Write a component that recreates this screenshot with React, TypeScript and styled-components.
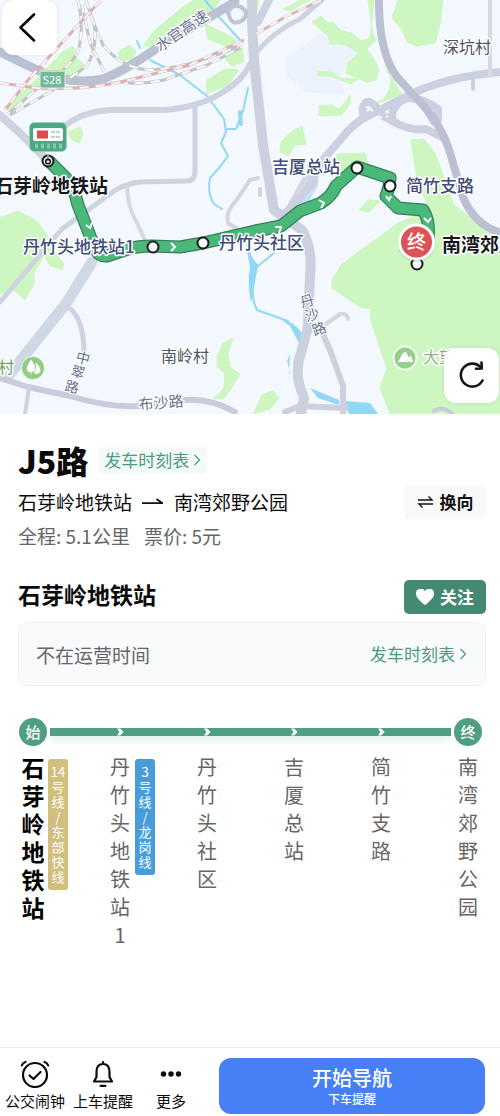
import React from "react";
import styled, { createGlobalStyle } from "styled-components";

const GlobalStyle = createGlobalStyle`
  * { box-sizing: border-box; }
  body {
    margin: 0;
    background: #fff;
    color: #0b0b0b;
    font-family: "Noto Sans CJK SC", "Noto Sans", sans-serif;
  }
  button { font-family: inherit; border: 0; padding: 0; cursor: pointer; color: inherit; }
  h1, h2, p, ol { margin: 0; padding: 0; }
  a { text-decoration: none; }
`;

const Page = styled.div`
  min-height: 100vh;
  display: flex;
  flex-direction: column;
`;

const MapPanel = styled.section`
  position: relative;
  height: 414px;
  overflow: hidden;
  background: #f3f9fe;
`;

const MapDrawing = styled.svg`
  display: block;
  width: 100%;
  height: 100%;
`;

const MapButton = styled.button<{ $corner: "back" | "refresh" }>`
  position: absolute;
  ${(p) => (p.$corner === "back" ? "left: 2px; top: 0;" : "right: 1px; bottom: 11px;")}
  width: 55px;
  height: 55px;
  display: flex;
  align-items: center;
  justify-content: center;
  background: #fff;
  border-radius: 12px;
  box-shadow: 0 0 4px rgba(80, 90, 120, 0.12);
`;

const Content = styled.main`
  flex: 1;
  padding: 26px 14px 0 18px;
`;

const Row = styled.div<{ $between?: boolean; $gap?: number }>`
  display: flex;
  align-items: center;
  justify-content: ${(p) => (p.$between ? "space-between" : "flex-start")};
  gap: ${(p) => p.$gap ?? 0}px;
`;

const LineName = styled.h1`
  font-size: 32px;
  line-height: 40px;
  font-weight: 900;
`;

const TimetableLink = styled.a<{ $tag?: boolean }>`
  display: inline-flex;
  align-items: center;
  gap: 4px;
  height: 27px;
  padding: ${(p) => (p.$tag ? "0 6px 0 5px" : "0")};
  border-radius: 4px;
  background: ${(p) => (p.$tag ? "#f4faf8" : "transparent")};
  color: #4a9c80;
  font-size: 17px;
  line-height: 24px;
`;

const DirectionRow = styled(Row)`
  padding-top: 5px;
`;

const Direction = styled.p`
  display: flex;
  align-items: center;
  gap: 10px;
  font-size: 19px;
  line-height: 34px;
`;

const Facts = styled.p`
  display: flex;
  gap: 14px;
  padding-top: 3px;
  color: #666;
  font-size: 19px;
  line-height: 28px;
`;

const PillButton = styled.button<{ $solid?: boolean }>`
  display: flex;
  align-items: center;
  justify-content: center;
  gap: 6px;
  width: 82px;
  height: 34px;
  border-radius: 5px;
  background: ${(p) => (p.$solid ? "#438973" : "#f9f9f9")};
  color: ${(p) => (p.$solid ? "#fff" : "#111")};
  font-size: 17px;
  line-height: 24px;
  font-weight: 700;
`;

const StopHeader = styled(Row)`
  align-items: flex-start;
  padding-top: 30px;
`;

const StopTitle = styled.h2`
  font-size: 23px;
  line-height: 28px;
  font-weight: 700;
`;

const StatusCard = styled.div`
  display: flex;
  align-items: center;
  justify-content: space-between;
  height: 64px;
  margin-top: 8px;
  padding: 0 18px 0 17px;
  border: 1px solid #f0f1f3;
  border-radius: 10px;
  background: #f9fafb;
  color: #666;
  font-size: 19px;
`;

const RouteTrack = styled.div`
  position: relative;
  display: flex;
  justify-content: space-between;
  align-items: center;
  height: 30px;
  margin: 31px 3px 0 0;
  &::before {
    content: "";
    position: absolute;
    left: 32px;
    right: 32px;
    top: 11px;
    height: 8px;
    background: #519f82;
    box-shadow: 0 5px 6px rgba(81, 159, 130, 0.16);
  }
`;

const TrackCell = styled.span`
  position: relative;
  width: 30px;
  display: flex;
  justify-content: center;
`;

const Terminal = styled.span`
  width: 28px;
  height: 28px;
  border-radius: 50%;
  background: #519f82;
  color: #fff;
  font-size: 15px;
  line-height: 28px;
  font-weight: 500;
  text-align: center;
`;

const Stops = styled.ol`
  display: flex;
  justify-content: space-between;
  align-items: flex-start;
  margin: 6px 3px 0 0;
  list-style: none;
`;

const Stop = styled.li`
  position: relative;
  width: 30px;
  display: flex;
  justify-content: center;
`;

const StopName = styled.span<{ $current?: boolean }>`
  width: 24px;
  color: ${(p) => (p.$current ? "#000" : "#666")};
  font-size: ${(p) => (p.$current ? 23 : 20)}px;
  font-weight: ${(p) => (p.$current ? 700 : 400)};
  line-height: 28px;
  text-align: center;
  line-break: anywhere;
`;

const Transfer = styled.span<{ $color: string }>`
  position: absolute;
  left: 30px;
  top: 6px;
  width: 20px;
  padding: 5px 2px 6px;
  border-radius: 3px;
  background: ${(p) => p.$color};
  color: #fff;
  font-size: 13px;
  line-height: 15px;
  text-align: center;
  line-break: anywhere;
`;

const BottomBar = styled.footer`
  display: flex;
  align-items: center;
  height: 69px;
  padding: 8px 15px 0 1px;
  border-top: 1px solid #ececec;
`;

const BarItem = styled.button`
  flex: none;
  width: 68px;
  display: flex;
  flex-direction: column;
  align-items: center;
  gap: 2px;
  background: none;
  font-size: 15px;
  line-height: 22px;
  white-space: nowrap;
`;

const StartButton = styled.button`
  flex: 1;
  height: 56px;
  margin-left: 14px;
  display: flex;
  flex-direction: column;
  align-items: center;
  justify-content: center;
  border-radius: 12px;
  background: #4780f6;
  color: #fff;
  font-size: 20px;
  line-height: 26px;
  font-weight: 500;
  small { font-size: 12px; line-height: 16px; }
`;

const Chevron = () => (
  <svg width="8" height="12" viewBox="0 0 8 12" fill="none" stroke="currentColor" strokeWidth="1.3" aria-hidden="true">
    <path d="M1.5 1 6.5 6l-5 5" />
  </svg>
);

const TrackChevron = () => (
  <svg width="8" height="8" viewBox="0 0 8 8" fill="#fff" aria-hidden="true">
    <path d="M1 .5h3.200L7.600 4 4.200 7.500H1L3.400 4z" />
  </svg>
);

const ROADS: [string, number, string][] = [
  ["M0 115 20 133 47 160 66 176", 8, "#cdd3e0"],
  ["M66 125Q84 111 112 110L165 110Q200 107 223 92Q243 80 250 64", 6, "#cdd3e0"],
  ["M195 106V171Q195 181 187 181L140 182Q122 184 110 194L62 229 0 302", 5, "#cdd3e0"],
  ["M127 187Q128 208 136 221L145 240", 4, "#d4d9e4"],
  ["M92 262 65 305 40 336 10 374", 11, "#d1d8e5"],
  ["M68 307Q83 317 84 350", 5, "#cdd3e0"],
  ["M0 378 28 387 70 396Q110 408 138 406L185 400Q210 398 235 412", 6, "#c8cddd"],
  ["M29 388 25 414", 4, "#cdd3e0"],
  ["M250 180 236 201Q225 212 228 223L240 231", 4, "#d1d6e2"],
  ["M254 55Q275 30 300 19L322 0", 5, "#ccd3e2"],
  ["M250 180 258 178M260 189V195", 4, "#d1d6e2"],
  ["M270 -2 258 22", 8, "#ccd2df"],
  ["M252 0V22L254 60 263 145 274 210 302 230Q313 249 310 275L308 327 301 353Q293 373 304 398L300 418", 10, "#cbd1df"],
  ["M310 182 292 214", 17, "#d1d7e4"],
  ["M500 72Q445 77 407 96L370 115Q355 121 341 139L321 162 309 188 281 218", 8, "#cbd1e1"],
  ["M363 116V107Q367 97 375 106L383 116 398 124Q413 131 426 129L444 138", 8, "#cbd1e1"],
  ["M392 121Q391 104 407 98Q424 98 438 109V120M422 102 434 122", 8, "#cbd1e1"],
  ["M490 0V76", 4, "#d5dae7"],
  ["M473 80V89", 4, "#cbd1e1"],
  ["M326 324 340 314Q347 313 348 319", 4, "#d2d7e0"],
  ["M321 330 330 350 343 386V414M285 412 300 406 345 408", 6, "#ccd1dd"],
  ["M434 411Q443 405 452 414", 4, "#c5cbe0"],
  ["M0 52 35 69Q68 86 103 79Q126 70 157 48L235 2", 9, "#b9c1d3"],
  ["M228 14Q231 3 241 7Q250 13 243 20Q232 27 229 15", 4, "#bdc5d7"],
  ["M379 -4Q378 51 397 77L419 101Q442 124 451 156L463 197Q475 226 502 233", 8, "#bcc0d3"],
];

const RAILS: [string, string][] = [
  ["M78 0Q84 26 79 48Q72 68 48 79L8 114", "#c4c3c9"],
  ["M86 0 94 24Q98 47 87 66L50 92 10 115", "#c4c3c9"],
  ["M82 4 90 43 104 71", "#c4c3c9"],
  ["M91 17 103 45Q123 69 150 70Q200 66 243 43", "#c4c3c9"],
  ["M119 82Q140 85 164 80L207 65 242 47", "#c4c3c9"],
  ["M101 0 60 45 28 80 5 110", "#ddb1b4"],
  ["M0 83 38 88Q91 91 137 78L190 65 244 40", "#ddb1b4"],
  ["M256 34 287 16 322 0", "#ddb1b4"],
];

const ROUTE =
  "M48 160 66 178Q74 187 78 205L94 246Q98 257 107 256L128 249Q138 246 152 246L180 247 203 243 255 231 281 226 300 211 321 203Q332 196 336 186L357 167 390 178 389 187 386 196 398 208 423 210Q430 220 428 238";

const PARKS = [
  "M143 46 155 30 184 6 194 0H220L207 20 196 30 160 46Z",
  "M118 52 129 45 136 51 133 60H120Z",
  "M205 24 232 37 242 47 244 62 232 66 225 59 230 48 208 39Z",
  "M206 94 207 80 225 69 239 70 228 85Z",
  "M62 52 73 46 77 58 85 66 77 77H50L10 112 6 107 43 73Z",
  "M68 132 80 127 83 134 79 143 71 139Z",
  "M0 218 18 211 37 221 47 235 53 249 64 264 62 270 50 266 44 255 34 273 34 284 25 300 14 290 0 294Z",
  "M250 0H259L257 12H250ZM283 9 301 0H310L290 11Z",
  "M312 22 321 16 327 22 334 23 340 30 353 34 361 41 370 38 374 0H368L373 35 376 40 367 49 374 59 379 70 376 80 366 82 346 73 348 63 358 53 346 45 339 44H330L328 36Z",
  "M392 18 398 0H443L440 24 435 43 417 46 407 42 402 30Z",
  "M317 71 332 72 339 78 358 79 351 84 330 76H318Z",
  "M319 106 332 105 339 109 346 101 350 95 350 104 342 115 319 116Z",
  "M280 152 281 142 291 132 302 126 306 144 295 145 288 156Z",
  "M385 62 387 71 402 94 376 104Q390 97 391 80Z",
  "M337 154 365 153 367 161 336 177Z",
  "M411 140 424 139 435 153 447 186 454 205 500 240V414H390L380 388 387 369 370 318 371 309 360 307 332 288 332 280 342 264 398 223 418 215 429 210 417 179Z",
  "M359 210 368 200 380 201 369 212Z",
  "M223 343 233 338 228 353 230 367 240 374 231 389 223 399 213 399 224 388 225 374 217 366 217 357Z",
  "M262 395 273 391 279 398 270 409 253 414Z",
];

const haloText = { stroke: "#fff", strokeWidth: 3, paintOrder: "stroke", strokeLinejoin: "round" } as const;

const RouteMap = () => (
  <MapDrawing viewBox="0 0 500 414" preserveAspectRatio="xMidYMid slice" role="img" aria-label="J5路线路地图">
    <path d="M285 58 325 30 360 48 340 75 345 95 305 92 286 75Z" fill="#edf3fd" />
    {PARKS.map((d) => (
      <path key={d} d={d} fill="#cef6c0" stroke="#cef6c0" strokeWidth="1" strokeLinejoin="round" />
    ))}
    <g fill="none" stroke="#92d8f6" strokeLinecap="round" strokeLinejoin="round">
      <path d="M137 41 140 48M150 60 180 75 207 96 224 119 226 132 221 143 228 156Q220 168 210 178Q207 193 214 204L222 209M226 129 236 129 243 111 248 88M205 0 220 18 240 40" strokeWidth="2" />
      <path d="M241 124 240 112" strokeWidth="4" />
      <path d="M248 240Q246 255 258 266L274 253M257 266Q248 292 257 310L288 321" strokeWidth="2" />
    </g>
    <path d="M247 250 258 266 251 303Q247 282 250 268ZM278 317Q296 322 303 335L299 343 290 326ZM290 354 289 372 291 377 287 361ZM310 388 339 400V405L318 398ZM345 401 370 403 378 414H349Z" fill="#92d8f6" />
    <g fill="none" strokeLinecap="round" strokeLinejoin="round">
      {ROADS.map(([d, width, color]) => (
        <path key={d} d={d} strokeWidth={width} stroke={color} />
      ))}
    </g>
    {RAILS.map(([d, color]) => (
      <g key={d} fill="none">
        <path d={d} stroke={color} strokeWidth="3" />
        <path d={d} stroke="#faf8fb" strokeWidth="2" strokeDasharray="9 7" />
      </g>
    ))}
    <path d="M366 107 373 111M378 116 382 118M386 117 388 116" stroke="#f3f8fe" strokeWidth="2" />
    <path d="M314 190 304 201" stroke="#bfe6f8" strokeWidth="3" />

    <rect x="40" y="70" width="25" height="18" rx="2" fill="#6fba9a" stroke="#d8eee0" />
    <path d="M41 71H64" stroke="#e2d4a7" strokeWidth="2" />
    <text x="52" y="84" fontSize="11" fill="#fff" textAnchor="middle">S28</text>

    <path d={ROUTE} fill="none" stroke="#367d5f" strokeWidth="13" strokeLinejoin="round" />
    <path d={ROUTE} fill="none" stroke="#4ab878" strokeWidth="10.500" strokeLinejoin="round" />
    <g fill="none" stroke="#fff" strokeWidth="2">
      <path d="M86 225 90 228 92 223M171 243 175 247 171 251M275 227 281 227 279 233M319 200 324 203 321 208M386 196 389 200 391 196M424 218 428 222 431 218" />
    </g>

    <g fontSize="17" fontWeight="500" fill="#414c78" {...haloText}>
      <text x="272" y="173">吉厦总站</text>
      <text x="406" y="192">简竹支路</text>
      <text x="23" y="253">丹竹头地铁站1</text>
      <text x="219" y="249">丹竹头社区</text>
    </g>
    <g fontSize="19" fontWeight="700" fill="#15171c" {...haloText}>
      <text x="108" y="193" textAnchor="end">石芽岭地铁站</text>
      <text x="442" y="252">南湾郊野公园</text>
    </g>
    <g fontSize="16" fill="#50545c" {...haloText}>
      <text x="443" y="53">深坑村</text>
      <text x="161" y="362">南岭村</text>
      <text x="14" y="373" textAnchor="end" fill="#6aa65f">村</text>
      <text x="423" y="363" fill="#93ae8c">大望山</text>
    </g>
    <g fontSize="15" fill="#68718f" {...haloText}>
      <text x="160" y="52" transform="rotate(-34 160 52)">水官高速</text>
      <text x="139" y="410" transform="rotate(-5 139 410)">布沙路</text>
      <g fontSize="14" textAnchor="middle" strokeWidth="2">
        <text x="83" y="363" transform="rotate(14 83 358)">中</text>
        <text x="78" y="377" transform="rotate(14 78 372)">翠</text>
        <text x="72" y="392" transform="rotate(14 72 387)">路</text>
        <text x="307" y="306" transform="rotate(-16 307 301)">丹</text>
        <text x="312" y="320" transform="rotate(-16 312 315)">沙</text>
        <text x="319" y="334" transform="rotate(-20 319 329)">路</text>
      </g>
    </g>

    {[[153, 247], [203, 243], [357, 168], [390, 186]].map(([x, y]) => (
      <circle key={x} cx={x} cy={y} r="5.500" fill="#fff" stroke="#1c1c1c" strokeWidth="2" />
    ))}
    <circle cx="48" cy="161" r="5.500" fill="#e9e9ec" stroke="#1c1c1c" strokeWidth="2" />
    <path d="M48 154V161" stroke="#9a9aa0" strokeWidth="2" />
    <circle cx="48" cy="161.500" r="2.300" fill="none" stroke="#1c1c1c" strokeWidth="1.600" />
    <rect x="29.500" y="122.500" width="37" height="29" rx="5" fill="#4ca782" stroke="#9bd3ba" />
    <rect x="33" y="128" width="30" height="13" rx="2" fill="#fff" />
    <rect x="37" y="130.500" width="11" height="8" fill="#db4c4c" />
    <path d="M51 132H60M51 137H60" stroke="#a9dfc6" strokeWidth="2" strokeDasharray="4 1" />
    <path d="M35 146H62" stroke="#80ccaa" strokeWidth="5" strokeDasharray="3 3" />

    <circle cx="417" cy="264" r="5.500" fill="#fff" stroke="#1c1c1c" strokeWidth="2" />
    <circle cx="416.500" cy="243" r="19" fill="#9aa0a8" opacity="0.3" />
    <circle cx="416.500" cy="242" r="17" fill="#dc5257" stroke="#fff" strokeWidth="3" />
    <text x="416.500" y="249" fontSize="19" fontWeight="500" fill="#fff" textAnchor="middle">终</text>

    <circle cx="33" cy="368" r="11.500" fill="#93cc84" stroke="#e6f8df" strokeWidth="1" />
    <path d="M31 360Q27 365 27 370Q30 374 35 370Q35 364 31 360ZM31 370V375M36 363Q41 367 40 372Q38 375 34 373Q37 370 36 363Z" fill="#fff" stroke="#fff" strokeWidth=".5" />
    <circle cx="405" cy="358" r="11.500" fill="#96cf8d" stroke="#f0fbec" strokeWidth="2" />
    <path d="M398 362 403 353 406 352 410 360 409 356H411L413 362Z" fill="#fff" />
  </MapDrawing>
);

type StopInfo = { name: string; current?: boolean; transfer?: string; color?: string };

const STOPS: StopInfo[] = [
  { name: "石芽岭地铁站", current: true, transfer: "14号线/东部快线", color: "#d1bf7d" },
  { name: "丹竹头地铁站1", transfer: "3号线/龙岗线", color: "#479ddc" },
  { name: "丹竹头社区" },
  { name: "吉厦总站" },
  { name: "简竹支路" },
  { name: "南湾郊野公园" },
];

export default function App() {
  return (
    <Page>
      <GlobalStyle />
      <MapPanel>
        <RouteMap />
        <MapButton $corner="back" aria-label="返回">
          <svg width="30" height="30" viewBox="0 0 30 30" fill="none" stroke="#080808" strokeWidth="2.600" strokeLinecap="round" strokeLinejoin="round">
            <path d="M19 1.500 5.500 14.500l13.500 13" />
          </svg>
        </MapButton>
        <MapButton $corner="refresh" aria-label="刷新">
          <svg width="30" height="30" viewBox="0 0 30 30" fill="none" stroke="#171717" strokeWidth="2.600" strokeLinecap="round">
            <path d="M24 6.500A11.500 11.500 0 1 0 25.500 19.500" />
            <path d="M24.500 1.500 24.800 7.500 19 7.700" strokeLinejoin="round" />
          </svg>
        </MapButton>
      </MapPanel>

      <Content>
        <Row $gap={11}>
          <LineName>J5路</LineName>
          <TimetableLink $tag href="#timetable">发车时刻表<Chevron /></TimetableLink>
        </Row>
        <DirectionRow $between>
          <Direction>
            石芽岭地铁站
            <svg width="22" height="10" viewBox="0 0 22 10" aria-label="至">
              <path d="M0 6.200H21M14.500 2 20.500 6.200" fill="none" stroke="#111" strokeWidth="1.800" />
            </svg>
            南湾郊野公园
          </Direction>
          <PillButton>
            <svg width="17" height="14" viewBox="0 0 17 14" fill="none" stroke="currentColor" strokeWidth="1.400" aria-hidden="true">
              <path d="M1 5H15L11.500 1.500M16 9H2L5.500 12.500" />
            </svg>
            换向
          </PillButton>
        </DirectionRow>
        <Facts>
          <span>全程: 5.1公里</span>
          <span>票价: 5元</span>
        </Facts>

        <StopHeader $between>
          <StopTitle>石芽岭地铁站</StopTitle>
          <PillButton $solid>
            <svg width="18" height="16" viewBox="0 0 18 16" fill="currentColor" aria-hidden="true">
              <path d="M9 16Q7.800 15.600 3 10.800 0 7.800 0 5A4.800 4.800 0 0 1 9 2.200 4.800 4.800 0 0 1 18 5q0 2.800-3 5.800Q10.200 15.600 9 16z" />
            </svg>
            关注
          </PillButton>
        </StopHeader>
        <StatusCard>
          不在运营时间
          <TimetableLink href="#timetable">发车时刻表<Chevron /></TimetableLink>
        </StatusCard>

        <RouteTrack>
          {STOPS.map((stop, i) => (
            <TrackCell key={stop.name}>
              {i === 0 ? <Terminal>始</Terminal> : i === STOPS.length - 1 ? <Terminal>终</Terminal> : <TrackChevron />}
            </TrackCell>
          ))}
        </RouteTrack>
        <Stops>
          {STOPS.map((stop) => (
            <Stop key={stop.name}>
              <StopName $current={stop.current}>{stop.name}</StopName>
              {stop.transfer && <Transfer $color={stop.color ?? "#479ddc"}>{stop.transfer}</Transfer>}
            </Stop>
          ))}
        </Stops>
      </Content>

      <BottomBar>
        <BarItem>
          <svg width="30" height="28" viewBox="0 0 30 28" fill="none" stroke="currentColor" strokeWidth="2.200" strokeLinecap="round" strokeLinejoin="round" aria-hidden="true">
            <circle cx="15" cy="15" r="12" />
            <path d="M9.500 15.500 13.500 19 20.500 12M1.800 5.500Q2.500 3 5.500 2M24.500 2Q27.500 3 28.200 5.500" />
          </svg>
          公交闹钟
        </BarItem>
        <BarItem>
          <svg width="24" height="28" viewBox="0 0 24 28" fill="none" stroke="currentColor" strokeWidth="2.200" strokeLinecap="round" strokeLinejoin="round" aria-hidden="true">
            <path d="M12 2V4M5.500 12Q5.500 4 12 4T18.500 12V17L21 21.500H3L5.500 17ZM9.500 25.800H14.500" />
          </svg>
          上车提醒
        </BarItem>
        <BarItem>
          <svg width="24" height="28" viewBox="0 0 24 28" fill="currentColor" aria-hidden="true">
            <circle cx="4.500" cy="14" r="2.700" />
            <circle cx="12" cy="14" r="2.700" />
            <circle cx="19.500" cy="14" r="2.700" />
          </svg>
          更多
        </BarItem>
        <StartButton>
          开始导航
          <small>下车提醒</small>
        </StartButton>
      </BottomBar>
    </Page>
  );
}
